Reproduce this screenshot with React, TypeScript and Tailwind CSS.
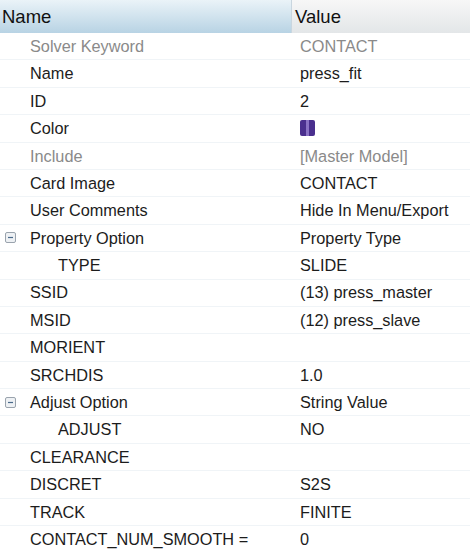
type Row = {
  label: string;
  value?: string;
  muted?: boolean;
  group?: boolean;
  indent?: boolean;
  swatch?: boolean;
};

const rows: Row[] = [
  { label: "Solver Keyword", value: "CONTACT", muted: true },
  { label: "Name", value: "press_fit" },
  { label: "ID", value: "2" },
  { label: "Color", swatch: true },
  { label: "Include", value: "[Master Model]", muted: true },
  { label: "Card Image", value: "CONTACT" },
  { label: "User Comments", value: "Hide In Menu/Export" },
  { label: "Property Option", value: "Property Type", group: true },
  { label: "TYPE", value: "SLIDE", indent: true },
  { label: "SSID", value: "(13) press_master" },
  { label: "MSID", value: "(12) press_slave" },
  { label: "MORIENT" },
  { label: "SRCHDIS", value: "1.0" },
  { label: "Adjust Option", value: "String Value", group: true },
  { label: "ADJUST", value: "NO", indent: true },
  { label: "CLEARANCE" },
  { label: "DISCRET", value: "S2S" },
  { label: "TRACK", value: "FINITE" },
  { label: "CONTACT_NUM_SMOOTH =", value: "0" },
];

function MinusBox() {
  return (
    <svg width="11" height="11" viewBox="0 0 11 11" className="shrink-0">
      <rect x="0.5" y="0.5" width="10" height="10" rx="1.5" fill="#eef1f4" stroke="#9aa3ad" />
      <line x1="3" y1="5.5" x2="8" y2="5.5" stroke="#4a6a8a" strokeWidth="1.2" />
    </svg>
  );
}

export default function App() {
  return (
    <div className="w-[470px] h-[552px] bg-white overflow-hidden font-['Liberation_Sans',Arial,sans-serif] text-[16.3px] text-[#1c1c1c]">

      {/* Header */}
      <div className="flex h-[33px] text-[18.5px] text-[#111]">
        <div className="w-[292px] flex items-center pl-[2px] bg-gradient-to-b from-[#eaf3f8] to-[#b8d3e4] border-r border-[#c9d6df]">
          Name
        </div>
        <div className="flex-1 flex items-center pl-[3px] bg-gradient-to-b from-[#f7f7f7] to-[#e3e6e8]">
          Value
        </div>
      </div>

      {/* Rows */}
      {rows.map((r) => (
        <div key={r.label} className="flex h-[27.4px] border-b border-[#f0f4f7]">
          <div className="w-[292px] flex items-center">
            <div className="w-[30px] flex items-center pl-[5px]">
              {r.group && <MinusBox />}
            </div>
            <span className={`${r.indent ? "pl-[28px]" : ""} ${r.muted ? "text-[#8a8a8a]" : ""}`}>
              {r.label}
            </span>
          </div>
          <div className={`flex-1 flex items-center pl-[8px] ${r.muted ? "text-[#8a8a8a]" : ""}`}>
            {r.swatch ? (
              <div className="w-[15px] h-[16px] rounded-[2px] bg-[#4a2f8e] flex justify-center">
                <div className="w-[3px] h-full bg-[#8a72c4]" />
              </div>
            ) : (
              r.value
            )}
          </div>
        </div>
      ))}

    </div>
  );
}
